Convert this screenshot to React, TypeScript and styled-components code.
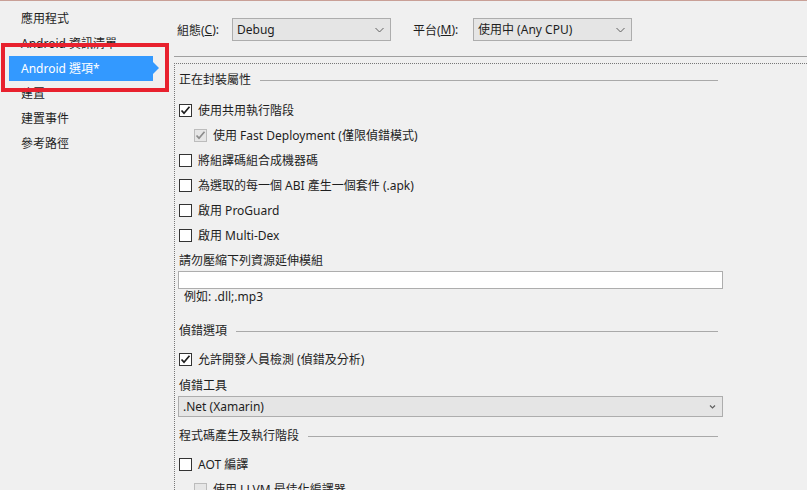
import React from "react";
import styled, { createGlobalStyle } from "styled-components";

const GlobalStyle = createGlobalStyle`
  html, body {
    margin: 0;
    padding: 0;
    background: #f0f0f0;
  }
  body {
    font-family: "Noto Sans", "Noto Sans CJK TC", sans-serif;
    font-size: 12px;
    color: #1e1e1e;
  }
`;

const Page = styled.div`
  position: relative;
  display: flex;
  width: 807px;
  height: 490px;
  overflow: hidden;
  box-sizing: border-box;
  border-top: 1px solid #c9a097;
  background: #f0f0f0;
`;

const Nav = styled.nav`
  width: 174px;
  flex: none;
  padding-top: 5px;
  box-sizing: border-box;
`;

const NavItem = styled.div<{ $active?: boolean }>`
  position: relative;
  height: 25px;
  display: flex;
  align-items: center;
  margin-left: 9px;
  width: 144px;
  padding-left: 12px;
  box-sizing: border-box;
  line-height: 16px;
  background: ${(p) => (p.$active ? "#3399ff" : "transparent")};
  color: ${(p) => (p.$active ? "#ffffff" : "#1e1e1e")};

  &::after {
    content: "";
    display: ${(p) => (p.$active ? "block" : "none")};
    position: absolute;
    right: -6px;
    top: 6px;
    border-left: 6px solid #3399ff;
    border-top: 6px solid transparent;
    border-bottom: 6px solid transparent;
  }
`;

const Highlight = styled.div`
  position: absolute;
  left: 1px;
  top: 42px;
  width: 168px;
  height: 49px;
  box-sizing: border-box;
  border: 4px solid #e8212e;
  pointer-events: none;
`;

const Main = styled.main`
  flex: 1;
  display: flex;
  flex-direction: column;
  min-width: 0;
`;

const TopBar = styled.div`
  flex: none;
  height: 56px;
  box-sizing: border-box;
  border-bottom: 1px solid #a0a0a0;
  display: flex;
  align-items: flex-start;
  padding: 17px 0 0 3px;
`;

const FieldLabel = styled.label<{ $w: number }>`
  width: ${(p) => p.$w}px;
  height: 23px;
  display: flex;
  align-items: center;
  flex: none;

  u {
    text-decoration: underline;
  }
`;

const Combo = styled.div<{ $w: number; $h?: number }>`
  width: ${(p) => p.$w}px;
  height: ${(p) => p.$h ?? 23}px;
  box-sizing: border-box;
  border: 1px solid #adadad;
  background: #e5e5e5;
  display: flex;
  align-items: center;
  justify-content: space-between;
  padding: 0 6px 0 4px;
  flex: none;
  line-height: 16px;
`;

const Spacer = styled.div<{ $w: number }>`
  width: ${(p) => p.$w}px;
  flex: none;
`;

const Content = styled.div`
  flex: none;
  margin-top: 6px;
  border-top: 1px dotted #777;
  border-left: 1px dotted #777;
  padding: 4px 0 40px 3px;
`;

const Form = styled.div`
  width: 545px;
  display: flex;
  flex-direction: column;
`;

const Heading = styled.div<{ $mt?: number }>`
  height: 24px;
  margin-top: ${(p) => p.$mt ?? 0}px;
  margin-right: 5px;
  padding-left: 1px;
  display: flex;
  align-items: center;
  gap: 9px;
  line-height: 16px;

  &::after {
    content: "";
    flex: 1;
    height: 1px;
    background: #a9a9a9;
  }
`;

const CheckRow = styled.div<{ $indent?: boolean; $mt?: number }>`
  height: 25px;
  flex: none;
  margin-top: ${(p) => p.$mt ?? 0}px;
  display: flex;
  align-items: center;
  gap: 6px;
  padding-left: ${(p) => (p.$indent ? 16 : 1)}px;
  line-height: 16px;
`;

const Box = styled.span<{ $disabled?: boolean }>`
  width: 13px;
  height: 13px;
  box-sizing: border-box;
  flex: none;
  border: 1px solid ${(p) => (p.$disabled ? "#bcbcbc" : "#333333")};
  background: ${(p) => (p.$disabled ? "#e6e6e6" : "#ffffff")};
  display: flex;
  align-items: center;
  justify-content: center;
`;

const Label = styled.div<{ $mt?: number }>`
  height: 20px;
  margin-top: ${(p) => p.$mt ?? 0}px;
  padding-left: 1px;
  display: flex;
  align-items: center;
  line-height: 16px;
`;

const TextBox = styled.div`
  height: 18px;
  box-sizing: border-box;
  border: 1px solid #adadad;
  background: #ffffff;
`;

const Hint = styled.div`
  height: 16px;
  padding-left: 6px;
  display: flex;
  align-items: center;
  line-height: 16px;
`;

const Chevron = ({ small }: { small?: boolean }) =>
  small ? (
    <svg width="7" height="6" viewBox="0 0 7 6">
      <path d="M1 1.5 L3.5 4 L6 1.5" fill="none" stroke="#606060" strokeWidth="1.2" />
    </svg>
  ) : (
    <svg width="9" height="6" viewBox="0 0 9 6">
      <path d="M0.5 1 L4.5 5 L8.5 1" fill="none" stroke="#606060" strokeWidth="1" />
    </svg>
  );

const Check = ({ disabled }: { disabled?: boolean }) => (
  <svg width="11" height="11" viewBox="0 0 11 11">
    <path
      d="M1.5 5.5 L4 8.2 L9.5 1.8"
      fill="none"
      stroke={disabled ? "#8c8c8c" : "#1e1e1e"}
      strokeWidth="1.7"
    />
  </svg>
);

const CheckBox = ({
  label,
  checked,
  disabled,
  indent,
  mt,
}: {
  label: string;
  checked?: boolean;
  disabled?: boolean;
  indent?: boolean;
  mt?: number;
}) => (
  <CheckRow $indent={indent} $mt={mt}>
    <Box $disabled={disabled}>{checked && <Check disabled={disabled} />}</Box>
    <span>{label}</span>
  </CheckRow>
);

const navItems = ["應用程式", "Android 資訊清單", "Android 選項*", "建置", "建置事件", "參考路徑"];

export default function App() {
  return (
    <>
      <GlobalStyle />
      <Page>
        <Nav>
          {navItems.map((item, i) => (
            <NavItem key={item} $active={i === 2}>
              {item}
            </NavItem>
          ))}
        </Nav>
        <Main>
          <TopBar>
            <FieldLabel $w={55}>
              組態(<u>C</u>):
            </FieldLabel>
            <Combo $w={159}>
              <span>Debug</span>
              <Chevron />
            </Combo>
            <Spacer $w={22} />
            <FieldLabel $w={60}>
              平台(<u>M</u>):
            </FieldLabel>
            <Combo $w={159}>
              <span>使用中 (Any CPU)</span>
              <Chevron />
            </Combo>
          </TopBar>
          <Content>
            <Form>
              <Heading>正在封裝屬性</Heading>
              <CheckBox label="使用共用執行階段" checked mt={6} />
              <CheckBox label="使用 Fast Deployment (僅限偵錯模式)" checked disabled indent />
              <CheckBox label="將組譯碼組合成機器碼" />
              <CheckBox label="為選取的每一個 ABI 產生一個套件 (.apk)" />
              <CheckBox label="啟用 ProGuard" />
              <CheckBox label="啟用 Multi-Dex" />
              <Label $mt={3}>請勿壓縮下列資源延伸模組</Label>
              <TextBox />
              <Hint>例如: .dll;.mp3</Hint>
              <Heading $mt={14}>偵錯選項</Heading>
              <CheckBox label="允許開發人員檢測 (偵錯及分析)" checked mt={4} />
              <Label $mt={4}>偵錯工具</Label>
              <Combo $w={545} $h={21}>
                <span>.Net (Xamarin)</span>
                <Chevron small />
              </Combo>
              <Heading $mt={7}>程式碼產生及執行階段</Heading>
              <CheckBox label="AOT 編譯" mt={4} />
              <CheckBox label="使用 LLVM 最佳化編譯器" disabled indent />
            </Form>
          </Content>
        </Main>
        <Highlight />
      </Page>
    </>
  );
}
